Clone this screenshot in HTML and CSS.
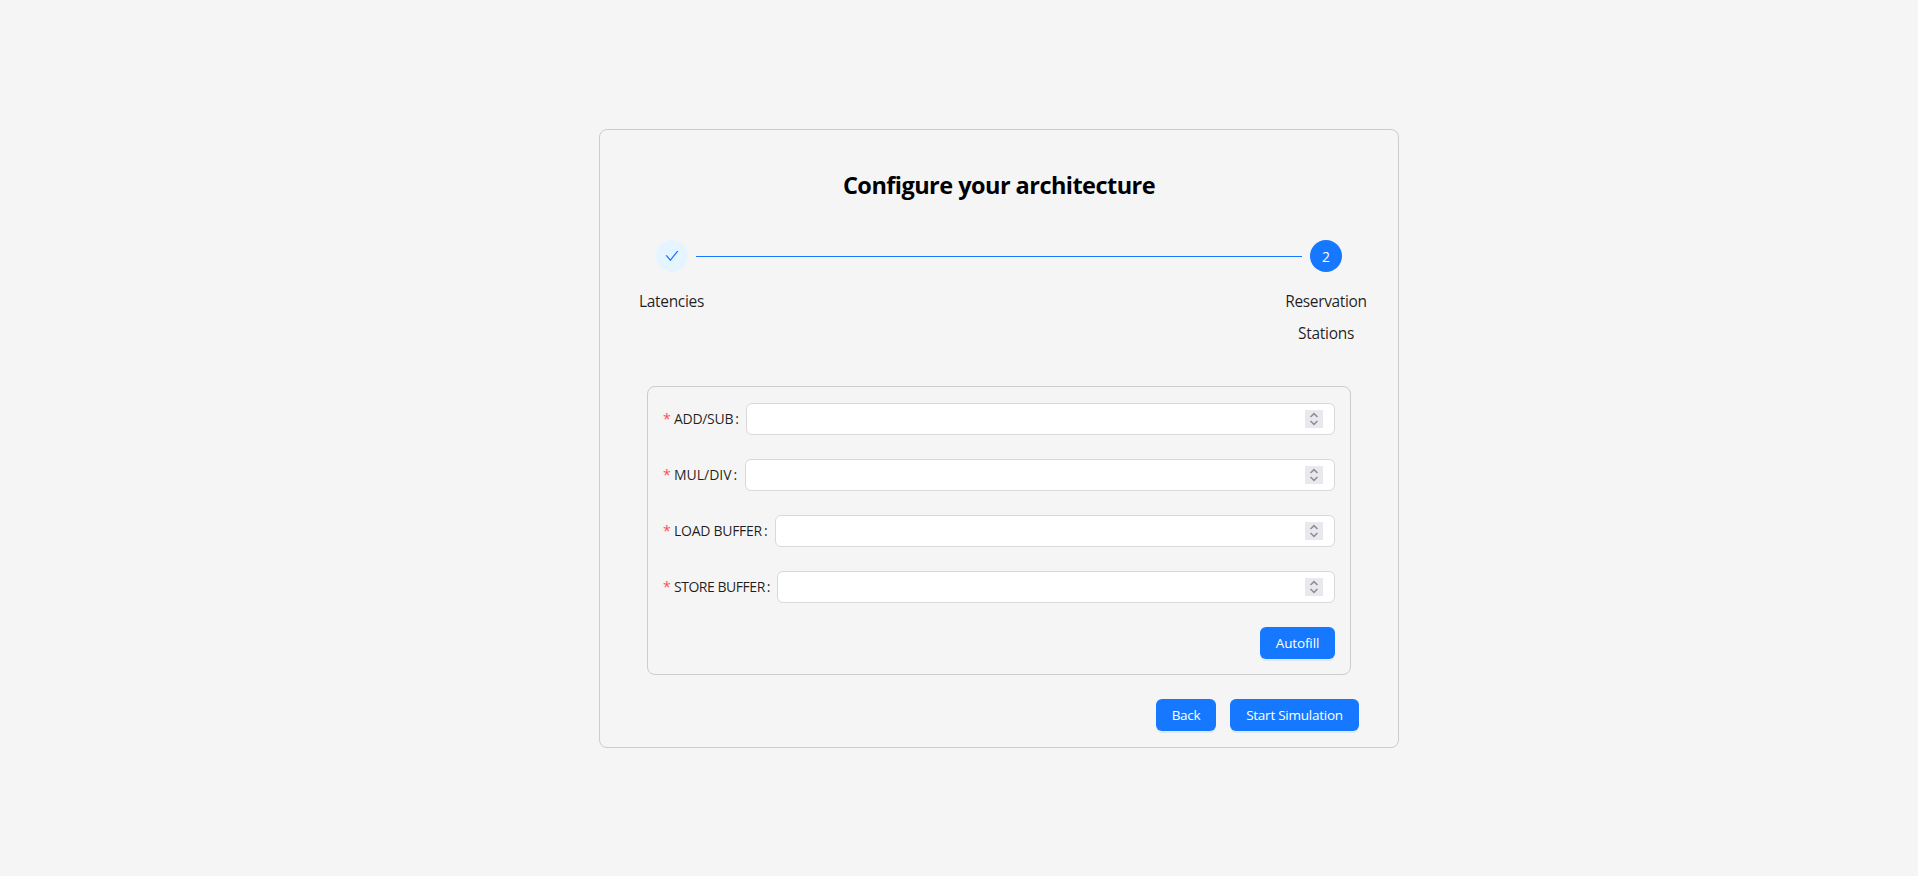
FILE: index.html
```html
<!DOCTYPE html>
<html lang="en">
<head>
<meta charset="utf-8">
<title>Configure your architecture</title>
<link rel="stylesheet" href="styles.css">
</head>
<body>
<main class="card">
  <h1 class="title"><span>Configure your architecture</span></h1>
  <div class="steps">
    <div class="step step-done">
      <div class="dot"><svg width="14" height="14" viewBox="64 64 896 896" fill="currentColor"><path d="M912 190h-69.900c-9.800 0-19.100 4.500-25.100 12.200L404.700 724.500 207 474a32 32 0 0 0-25.100-12.200H112c-6.700 0-10.400 7.700-6.300 12.900l273.900 347c12.800 16.200 37.400 16.200 50.300 0l488.400-618.900c4.100-5.100.4-12.800-6.300-12.800z"/></svg></div>
      <div class="step-name latencies">Latencies</div>
    </div>
    <div class="tail"></div>
    <div class="step step-active">
      <div class="dot">2</div>
      <div class="step-name"><span class="reservation">Reservation</span><br><span class="stations">Stations</span></div>
    </div>
  </div>
  <form class="panel">
    <div class="row"><label class="label add"><i>*</i><span>ADD/SUB</span><b>:</b></label><div class="input"><div class="spin"><svg width="18" height="18" fill="none" stroke="#8f8f9d" stroke-width="1.600"><path d="M5.500 7 9 3.700 12.500 7M5.500 11 9 14.300 12.500 11"/></svg></div></div></div>
    <div class="row"><label class="label mul"><i>*</i><span>MUL/DIV</span><b>:</b></label><div class="input"><div class="spin"><svg width="18" height="18" fill="none" stroke="#8f8f9d" stroke-width="1.600"><path d="M5.500 7 9 3.700 12.500 7M5.500 11 9 14.300 12.500 11"/></svg></div></div></div>
    <div class="row"><label class="label load"><i>*</i><span>LOAD BUFFER</span><b>:</b></label><div class="input"><div class="spin"><svg width="18" height="18" fill="none" stroke="#8f8f9d" stroke-width="1.600"><path d="M5.500 7 9 3.700 12.500 7M5.500 11 9 14.300 12.500 11"/></svg></div></div></div>
    <div class="row"><label class="label store"><i>*</i><span>STORE BUFFER</span><b>:</b></label><div class="input"><div class="spin"><svg width="18" height="18" fill="none" stroke="#8f8f9d" stroke-width="1.600"><path d="M5.500 7 9 3.700 12.500 7M5.500 11 9 14.300 12.500 11"/></svg></div></div></div>
    <button type="button" class="btn autofill">Autofill</button>
  </form>
  <div class="actions">
    <button type="button" class="btn back">Back</button>
    <button type="button" class="btn start">Start Simulation</button>
  </div>
</main>
</body>
</html>
```

FILE: styles.css
```css
* { box-sizing: border-box; }
body {
  margin: 0;
  height: 876px;
  padding: 129px 0 0 599px;
  background: #f5f5f5;
  color: rgba(0, 0, 0, 0.88);
  font-family: "Segoe UI", "Open Sans", "Noto Sans", sans-serif;
  font-size: 14px;
}
.card {
  width: 800px;
  height: 619px;
  padding: 0 39px;
  border: 1px solid #ccc;
  border-radius: 8px;
}
.title {
  margin: 37px 0 0;
  height: 36px;
  line-height: 36px;
  text-align: center;
  font-size: 23.5px;
  font-weight: 700;
  letter-spacing: -0.54px;
  color: #000;
}
.steps {
  display: flex;
  margin: 37px -8px 0 0;
  height: 146px;
}
.step {
  flex: none;
  width: 82px;
  display: flex;
  flex-direction: column;
  align-items: center;
}
.step-done { width: 65px; }
.dot {
  width: 32px;
  height: 32px;
  border-radius: 50%;
  display: flex;
  align-items: center;
  justify-content: center;
  font-size: 14px;
}
.step-done .dot { background: #e6f4ff; color: #1677ff; }
.step-active .dot { background: #1677ff; color: #fff; }
.step-name {
  margin-top: 13px;
  font-size: 15.5px;
  line-height: 32px;
  text-align: center;
  white-space: nowrap;
}
.latencies { letter-spacing: -0.32px; }
.reservation { letter-spacing: -0.35px; }
.stations { letter-spacing: -0.27px; }
.tail {
  flex: 1;
  height: 1px;
  margin: 16px -17px 0 -8px;
  background: #1677ff;
}
.panel {
  display: flex;
  flex-direction: column;
  gap: 24px;
  width: 704px;
  height: 289px;
  margin-left: 8px;
  padding: 16px 15px;
  border: 1px solid #ccc;
  border-radius: 8px;
}
.row { display: flex; height: 32px; }
.label {
  flex: none;
  display: flex;
  line-height: 32px;
  font-size: 14px;
  white-space: nowrap;
}
.label i { width: 11px; font-style: normal; color: #ff4d4f; }
.label b { margin-left: 2px; font-weight: 400; }
.add { width: 83px; letter-spacing: -0.3px; }
.mul { width: 82px; letter-spacing: -0.02px; }
.load { width: 112px; letter-spacing: -0.28px; }
.store { width: 114px; letter-spacing: -0.47px; }
.input {
  flex: 1;
  display: flex;
  align-items: center;
  justify-content: flex-end;
  padding-right: 11px;
  background: #fff;
  border: 1px solid #d9d9d9;
  border-radius: 6px;
}
.spin { width: 18px; height: 18px; background: #e9e9ed; }
.spin svg { display: block; }
.btn {
  height: 32px;
  padding: 0;
  border: 0;
  border-radius: 6px;
  background: #1677ff;
  color: #fff;
  font: 400 13.5px/32px "Segoe UI", "Open Sans", "Noto Sans", sans-serif;
  box-shadow: 0 2px 0 rgba(5, 145, 255, 0.1);
  white-space: nowrap;
}
.autofill { align-self: flex-end; width: 75px; letter-spacing: -0.15px; }
.actions {
  display: flex;
  justify-content: flex-end;
  gap: 14px;
  margin-top: 24px;
}
.back { width: 60px; letter-spacing: -0.3px; }
.start { width: 129px; letter-spacing: -0.25px; }
```
